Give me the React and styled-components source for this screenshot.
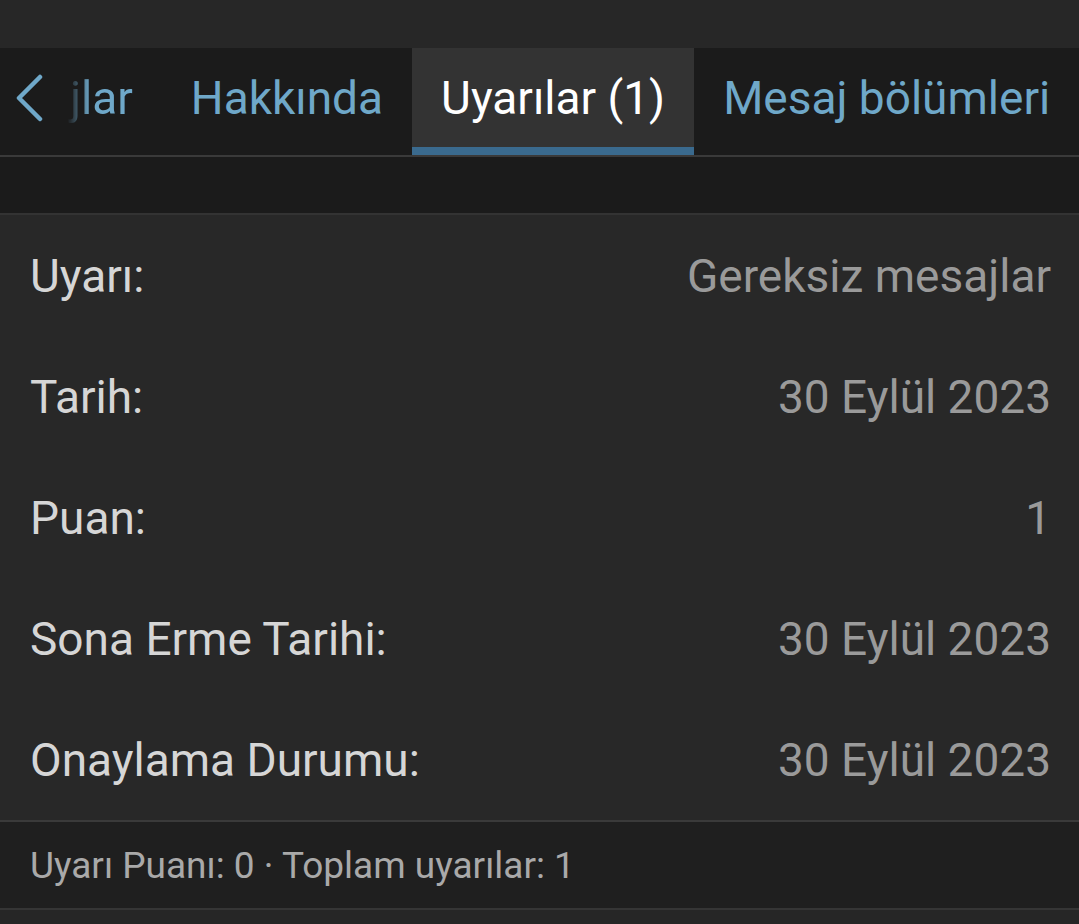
import React from "react"
import styled, { createGlobalStyle } from "styled-components"

const GlobalStyle = createGlobalStyle`
  html, body {
    margin: 0;
    padding: 0;
    background: #1b1b1b;
  }
  body {
    font-family: Roboto, "Noto Sans", sans-serif;
    -webkit-font-smoothing: antialiased;
  }
`

const Screen = styled.div`
  width: 1079px;
  height: 924px;
  display: flex;
  flex-direction: column;
  background: #1b1b1b;
  overflow: hidden;
`

const StatusBar = styled.div`
  height: 48px;
  background: #272727;
`

const TabBar = styled.nav`
  position: relative;
  height: 107px;
  display: flex;
  align-items: stretch;
  border-bottom: 2px solid #3a3a3a;
  background: #1b1b1b;
  overflow: hidden;
`

const BackButton = styled.button`
  width: 60px;
  flex: none;
  display: flex;
  align-items: center;
  justify-content: center;
  padding: 0 2px 8px 0;
  background: transparent;
  border: none;
  color: #6fa8c9;
`

const Tab = styled.div`
  flex: none;
  display: flex;
  align-items: center;
  padding: 0 29px 8px;
  font-size: 46px;
  white-space: nowrap;
  color: ${p => (p.active ? "#ffffff" : "#6fa8c9")};
  background: ${p => (p.active ? "#333333" : "transparent")};
  box-shadow: ${p => (p.active ? "inset 0 -8px 0 #3a6a8e" : "none")};
`

const FadedTab = styled(Tab)`
  padding-left: 10px;
  -webkit-mask-image: linear-gradient(to right, transparent 0, rgba(0,0,0,0.1) 10px, #000 30px);
  mask-image: linear-gradient(to right, transparent 0, rgba(0,0,0,0.1) 10px, #000 30px);
`

const Spacer = styled.div`
  height: 56px;
  border-bottom: 2px solid #333333;
`

const Details = styled.section`
  background: #282828;
  display: flex;
  flex-direction: column;
  border-bottom: 2px solid #3a3a3a;
`

const Row = styled.div`
  height: 121px;
  display: flex;
  align-items: center;
  justify-content: space-between;
  padding: 0 28px 0 30px;
  font-size: 46px;
`

const Label = styled.span`
  color: #d6d6d6;
`

const Value = styled.span`
  color: #9a9a9a;
`

const Footer = styled.footer`
  height: 86px;
  display: flex;
  align-items: center;
  padding: 0 30px;
  background: #1f1f1f;
  border-bottom: 2px solid #353535;
  font-size: 37px;
  color: #a9a9a9;
`

const Bottom = styled.div`
  flex: 1;
  background: #262626;
`

const Chevron = () => (
  <svg width="30" height="48" viewBox="0 0 30 48" fill="none">
    <path d="M26 3 L5 24 L26 45" stroke="currentColor" strokeWidth="4.5" strokeLinecap="round" strokeLinejoin="round" />
  </svg>
)

const rows = [
  ["Uyarı:", "Gereksiz mesajlar"],
  ["Tarih:", "30 Eylül 2023"],
  ["Puan:", "1"],
  ["Sona Erme Tarihi:", "30 Eylül 2023"],
  ["Onaylama Durumu:", "30 Eylül 2023"],
]

const App = () => (
  <Screen>
    <GlobalStyle />
    <StatusBar />
    <TabBar>
      <BackButton aria-label="Geri">
        <Chevron />
      </BackButton>
      <FadedTab>jlar</FadedTab>
      <Tab>Hakkında</Tab>
      <Tab active>Uyarılar (1)</Tab>
      <Tab>Mesaj bölümleri</Tab>
    </TabBar>
    <Spacer />
    <Details>
      {rows.map(([label, value]) => (
        <Row key={label}>
          <Label>{label}</Label>
          <Value>{value}</Value>
        </Row>
      ))}
    </Details>
    <Footer>Uyarı Puanı: 0 · Toplam uyarılar: 1</Footer>
    <Bottom />
  </Screen>
)

export default App
